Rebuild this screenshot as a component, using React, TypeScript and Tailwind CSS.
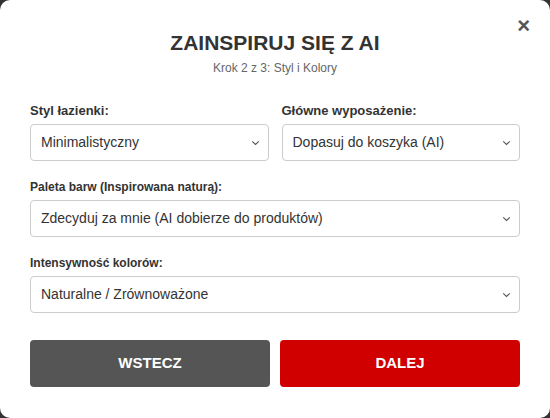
import React, { useState } from 'react';

const fields = {
  style: ['Minimalistyczny', 'Nowoczesny', 'Industrialny', 'Skandynawski'],
  equipment: ['Dopasuj do koszyka (AI)', 'Wanna', 'Prysznic'],
  palette: ['Zdecyduj za mnie (AI dobierze do produktów)', 'Zieleń lasu', 'Piasek i kamień'],
  intensity: ['Naturalne / Zrównoważone', 'Stonowane', 'Wyraziste'],
};

const Chevron = () => (
  <svg
    className="pointer-events-none absolute right-[9px] top-1/2 -translate-y-1/2"
    width="9"
    height="6"
    viewBox="0 0 9 6"
    fill="none"
  >
    <path d="M1.2 1.4 L4.5 4.5 L7.8 1.4" stroke="#555" strokeWidth="1.1" />
  </svg>
);

const Field = ({ label, options, small }: { label: string; options: string[]; small?: boolean }) => {
  const [value, setValue] = useState(options[0]);
  return (
    <label className="flex flex-col gap-[5px]">
      <span className={`${small ? 'text-[12px]' : 'text-[13px]'} font-bold leading-[16px] text-[#333]`}>{label}</span>
      <div className="relative">
        <select
          value={value}
          onChange={(e) => setValue(e.target.value)}
          className="h-[37px] w-full appearance-none rounded-[4px] border border-[#ccc] bg-white pl-[10px] pr-[24px] text-[14px] text-[#333] outline-none"
        >
          {options.map((o) => (
            <option key={o}>{o}</option>
          ))}
        </select>
        <Chevron />
      </div>
    </label>
  );
};

const App = () => {
  return (
    <div className="h-[418px] w-[550px] bg-[#333]" style={{ fontFamily: '"Liberation Sans", Arial, sans-serif' }}>
      <div className="relative flex h-full flex-col rounded-[10px] bg-white px-[30px] pt-[29px]">
        <button className="absolute right-[20px] top-[15px] text-[22px] font-bold leading-none text-[#555]">×</button>

        {/* Header */}
        <div className="mb-[26px] text-center">
          <h2 className="text-[21px] font-bold leading-[28px] text-[#333]">ZAINSPIRUJ SIĘ Z AI</h2>
          <p className="mt-[2px] text-[12px] text-[#666]">Krok 2 z 3: Styl i Kolory</p>
        </div>

        <div className="flex flex-col gap-[18px]">
          <div className="grid grid-cols-2 gap-[13px]">
            <Field label="Styl łazienki:" options={fields.style} />
            <Field label="Główne wyposażenie:" options={fields.equipment} />
          </div>
          <Field label="Paleta barw (Inspirowana naturą):" options={fields.palette} small />
          <Field label="Intensywność kolorów:" options={fields.intensity} small />
        </div>

        <div className="mt-[27px] grid grid-cols-2 gap-[10px]">
          <button className="h-[47px] rounded-[4px] bg-[#555] text-[15px] font-bold text-white">WSTECZ</button>
          <button className="h-[47px] rounded-[4px] bg-[#d10000] text-[15px] font-bold text-white">DALEJ</button>
        </div>
      </div>
    </div>
  );
};

export default App;
